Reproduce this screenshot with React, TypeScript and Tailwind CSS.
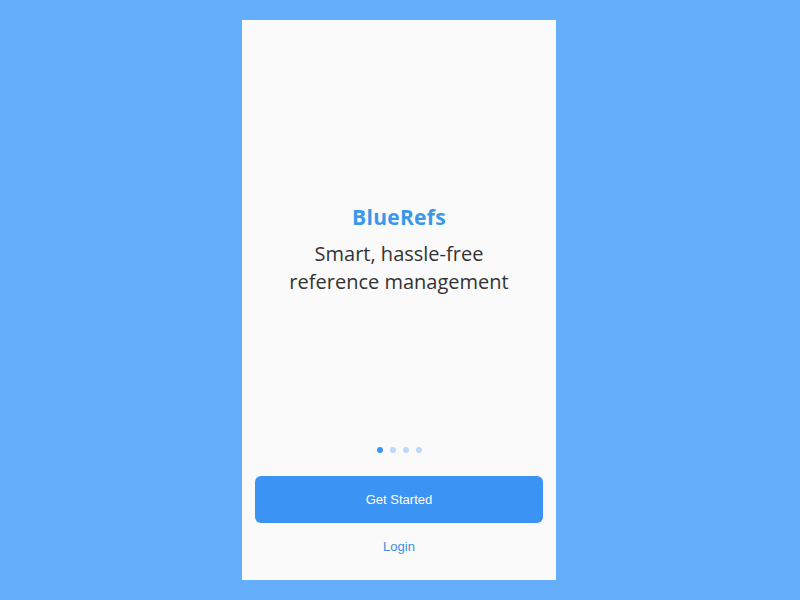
export default function App() {
  return (
    <div className="w-[800px] h-[600px] bg-[#65aefb] flex items-center pl-[242px]">
      <div className="w-[314px] h-[560px] bg-[#fafafa] flex flex-col items-center" style={{ fontFamily: '"Open Sans", "Liberation Sans", sans-serif' }}>
        <div className="h-[183px] shrink-0" />
        <div className="text-[21px] leading-[28px] font-bold tracking-[0.3px] text-[#3a97ea]">BlueRefs</div>
        <div className="mt-[9px] text-[20px] leading-[28px] text-[#333333] text-center">
          Smart, hassle-free
          <br />
          reference management
        </div>
        <div className="flex-1" />
        <div className="flex gap-[7px] mb-[23px]">
          <div className="w-[6px] h-[6px] rounded-full bg-[#3b93f3]" />
          <div className="w-[6px] h-[6px] rounded-full bg-[#bcd9f7]" />
          <div className="w-[6px] h-[6px] rounded-full bg-[#bcd9f7]" />
          <div className="w-[6px] h-[6px] rounded-full bg-[#bcd9f7]" />
        </div>
        <button className="w-[288px] h-[47px] rounded-[6px] bg-[#3b93f3] text-white text-[13px]" style={{ fontFamily: '"Liberation Sans", Arial, sans-serif' }}>
          Get Started
        </button>
        <div className="mt-[15px] mb-[24px] text-[13px] leading-[18px] text-[#3a8fe0]" style={{ fontFamily: '"Liberation Sans", Arial, sans-serif' }}>
          Login
        </div>
      </div>
    </div>
  );
}
